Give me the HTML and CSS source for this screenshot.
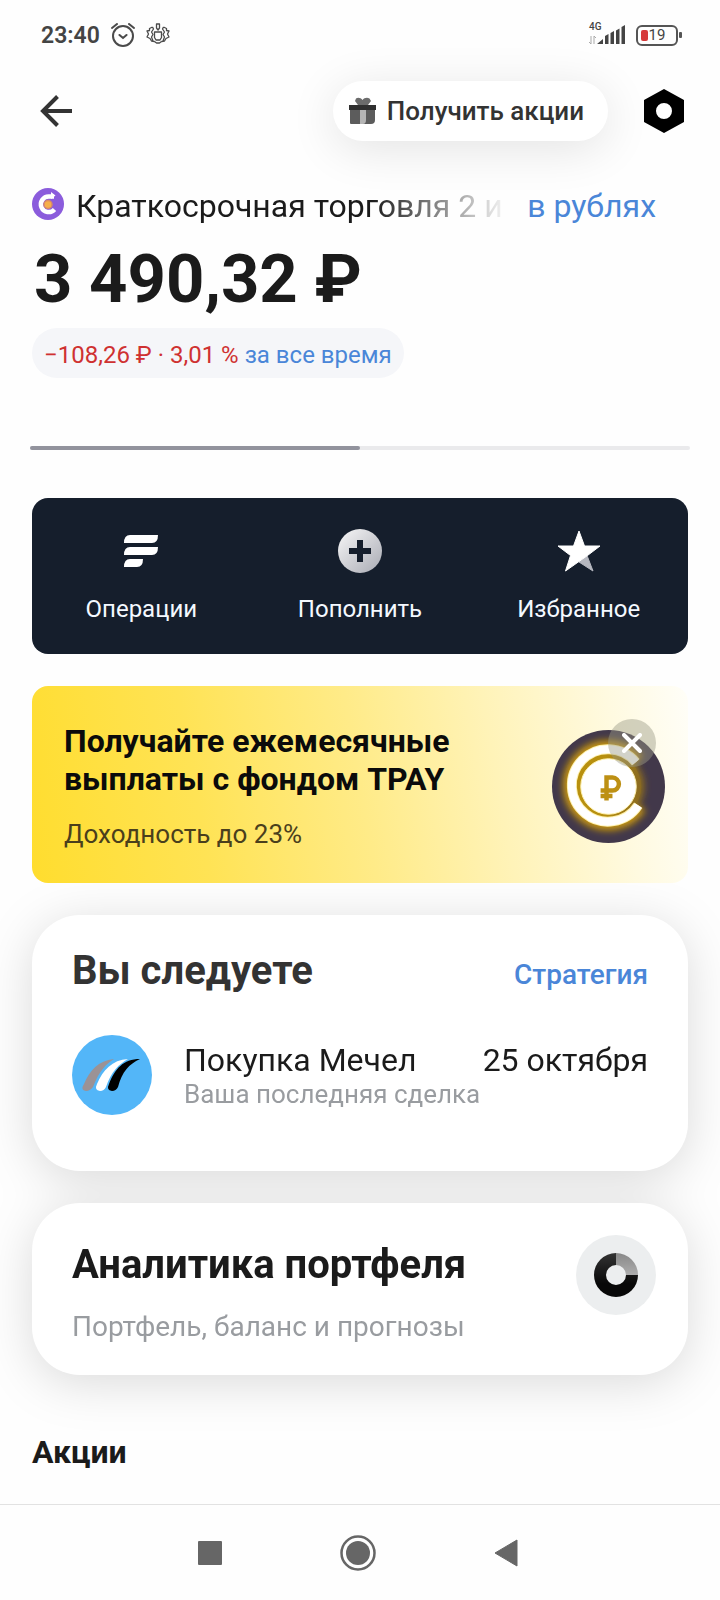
FILE: index.html
```html
<!DOCTYPE html>
<html lang="ru">
<head>
<meta charset="utf-8">
<meta name="viewport" content="width=device-width, initial-scale=1">
<title>Портфель</title>
<link rel="stylesheet" href="styles.css">
</head>
<body>
<div class="status">
  <span class="status-time">23:40</span>
  <svg class="status-icon" width="24" height="24" viewBox="0 0 24 24" fill="none" stroke="#4a4a4a" stroke-width="2" stroke-linecap="round">
    <circle cx="12" cy="13" r="10"/><path d="M8.500 12l3.500 3 3.500-3M1 5l5-4M23 5l-5-4"/>
  </svg>
  <svg class="status-icon" width="24" height="24" viewBox="0 0 24 24" fill="none" stroke="#4a4a4a" stroke-width="1.300" stroke-linejoin="round">
    <path d="M10.500 1h3v4l-1.500 2-1.500-2zM8.500 9h7v5.500l-1.500 2.500h-4l-1.500-2.500z"/>
    <path d="M6.500 4L3.500 5.500v2L1 8l1.500 3L1 14l3 1.500L5.500 18l3 .5M6.500 4l1 2-2 3 1.500 2.500-1.500 2.500 1.500 4M17.500 4l3 1.500v2L23 8l-1.500 3 1.500 3-3 1.500-1.500 2.500-3 .5M17.500 4l-1 2 2 3-1.500 2.500 1.500 2.500-1.500 4M8.500 18.500L10.500 20h3l2-1.500"/>
  </svg>
  <span class="status-gap"></span>
  <span class="network">
    <span class="network-type">4G</span>
    <svg width="38" height="20" viewBox="0 0 38 20">
      <path d="M4 11v8l-2-2M7 19v-8l2 2" fill="none" stroke="#aaa"/>
      <path d="M10 19h6v-5zM18 19h3.500V9L18 11zM23.500 19H27V6l-3.500 2zM29 19h3.500V3.500L29 5.500zM34.500 19H38V0l-3.500 2z" fill="#444"/>
    </svg>
  </span>
  <span class="battery"><span class="battery-level"></span>19</span>
</div>

<header class="topbar">
  <button class="icon-button" aria-label="Назад">
    <svg width="32" height="32" viewBox="0 0 32 32" fill="none" stroke="#333" stroke-width="4"><path d="M32 16H3M17.500 1.500L3 16l14.500 14.500"/></svg>
  </button>
  <button class="gift">
    <svg width="28" height="28" viewBox="0 0 28 28">
      <path d="M7 1.500C9 0 12 1 13.500 3 15 1 18 0 20.500 1.500L22 4l-3 4H9L6 4z" fill="#6c6c6c"/>
      <path d="M1 13h25v10q0 4-4 4H2q-1 0-1-1z" fill="#5c5c5c"/>
      <path d="M11 13h6v10q0 4-3 4h-3z" fill="#b5b5b5"/>
      <path d="M0 8h27v5H0z" fill="#303030"/>
    </svg>
    Получить акции
  </button>
  <button class="icon-button" aria-label="Настройки">
    <svg width="40" height="44" viewBox="0 0 40 44"><path fill-rule="evenodd" d="M20 0l20 11v22L20 44 0 33V11zM20 14a8 8 0 1 0 0 16 8 8 0 0 0 0-16z"/></svg>
  </button>
</header>

<main class="content">
  <section class="account">
    <div class="account-row">
      <svg class="account-logo" width="32" height="32" viewBox="0 0 32 32">
        <circle cx="16" cy="16" r="16" fill="#8b5cdc"/>
        <path d="M22 8.500h-5a7.800 7.800 0 1 0 5.500 13" fill="none" stroke="#fff" stroke-width="4.500"/>
        <path d="M19 4l4.500 3.500L19 11z" fill="#fff"/>
        <circle cx="16" cy="16.500" r="4" fill="#f6b04a" stroke="#d98a68" stroke-width="1.500"/>
      </svg>
      <span class="account-name">Краткосрочная торговля 2 и 3</span>
      <a class="currency" href="#currency">в рублях</a>
    </div>
    <h1 class="balance">3 490,32 ₽</h1>
    <button class="change"><span class="loss">−108,26 ₽ · 3,01 %</span><span class="period">за все время</span></button>
  </section>

  <div class="pager"><span class="pager-current"></span></div>

  <nav class="actions">
    <button class="action">
      <span class="action-icon"><svg width="34" height="32" viewBox="0 0 34 32" fill="#fff"><path d="M6 0h28q0 8-6 8H0Q0 0 6 0zM6 12h28q0 8-6 8H0q0-8 6-8zM6 24h13q0 8-6 8H0q0-8 6-8z"/></svg></span>
      Операции
    </button>
    <button class="action">
      <span class="action-icon"><svg width="44" height="44" viewBox="0 0 44 44">
        <defs><linearGradient id="coin" x1="0" y1="0" x2="1" y2="1"><stop offset=".15" stop-color="#ececee"/><stop offset=".9" stop-color="#b0b2ba"/></linearGradient></defs>
        <circle cx="22" cy="22" r="22" fill="url(#coin)"/>
        <path d="M22 14v16M14 22h16" stroke="#151e2c" stroke-width="6" stroke-linecap="square"/>
      </svg></span>
      Пополнить
    </button>
    <button class="action">
      <span class="action-icon"><svg width="44" height="42" viewBox="0 0 44 42" stroke-linejoin="round" stroke-width="1">
        <path d="M30 25.500L36 41 22 32z" fill="#b6b8c0" stroke="#b6b8c0"/>
        <path d="M22 1l5.500 15H43L30.500 25.500 8.500 41l5-15.500L1 16h15.500z" fill="#fff" stroke="#fff"/>
      </svg></span>
      Избранное
    </button>
  </nav>

  <section class="promo">
    <div class="promo-text">
      <h2 class="promo-title">Получайте ежемесячные выплаты с фондом TPAY</h2>
      <p class="promo-note">Доходность до 23%</p>
    </div>
    <div class="promo-art">
      <svg width="113" height="113" viewBox="0 0 114 114">
        <defs>
          <linearGradient id="rim" x1="0" y1="0" x2="1" y2="0"><stop offset=".45" stop-color="#b8900f"/><stop offset="1" stop-color="#8a6a20"/></linearGradient>
          <filter id="halo" x="-30%" y="-30%" width="160%" height="160%"><feGaussianBlur stdDeviation="4"/></filter>
        </defs>
        <circle cx="57" cy="57" r="57" fill="#42384a"/>
        <path d="M84.500 32.500A36.500 36.500 0 1 0 87 76" fill="none" stroke="#c8960c" stroke-width="18" filter="url(#halo)"/>
        <circle cx="59" cy="57" r="34" fill="url(#rim)" filter="url(#halo)"/>
        <circle cx="57" cy="57" r="33" fill="url(#rim)"/>
        <path d="M84.500 32.500A36.500 36.500 0 1 0 87 76" fill="none" stroke="#fff2b0" stroke-width="10"/>
        <path d="M84.500 32.500A36.500 36.500 0 1 0 87 76" fill="none" stroke="#fff" stroke-width="8"/>
        <circle cx="57" cy="57" r="28" fill="#fff" stroke="#fff2b0"/>
        <path d="M55 71V48h6a6.500 6.500 0 0 1 0 13H49M49 66.500h12" fill="none" stroke="#bd9014" stroke-width="4.500"/>
      </svg>
      <button class="promo-close" aria-label="Закрыть">
        <svg width="20" height="20" viewBox="0 0 20 20" stroke="#fff" stroke-width="4" stroke-linecap="round"><path d="M2 2l16 16M18 2L2 18"/></svg>
      </button>
    </div>
  </section>

  <div class="cards">
    <section class="card strategy">
      <div class="card-head">
        <h2 class="card-title following">Вы следуете</h2>
        <a class="card-link" href="#strategy">Стратегия</a>
      </div>
      <div class="deal">
        <svg width="80" height="80" viewBox="0 0 80 80">
          <circle cx="40" cy="40" r="40" fill="#53b6f8"/>
          <path d="M12 49C18 35 26 26 42 24c-8 5-15 12-21 28q-3 4-7 4-6-1-2-7z" fill="#9b9295"/>
          <path d="M25 49C31 35 40 25 56 24c-9 5-17 13-22 28q-2 4-6 4-6-1-3-7z" fill="#fff"/>
          <path d="M37 49C43 34 51 24 68 24c-11 5-18 13-22 28q-2 4-6 4-6-1-3-7z"/>
        </svg>
        <div class="deal-text">
          <div class="deal-line"><span>Покупка Мечел</span><span>25 октября</span></div>
          <div class="deal-note">Ваша последняя сделка</div>
        </div>
      </div>
    </section>
    <section class="card analytics">
      <div>
        <h2 class="card-title">Аналитика портфеля</h2>
        <p class="card-note">Портфель, баланс и прогнозы</p>
      </div>
      <svg width="80" height="80" viewBox="0 0 80 80">
        <defs>
          <linearGradient id="ring" x1="0" y1="0" x2="0" y2="1"><stop offset="0" stop-color="#333"/><stop offset=".7" stop-color="#080808"/></linearGradient>
          <linearGradient id="part" x1="0" y1="0" x2="0" y2="1"><stop offset="0" stop-color="#888"/><stop offset="1" stop-color="#adadad"/></linearGradient>
        </defs>
        <circle cx="40" cy="40" r="40" fill="#eceeef"/>
        <path d="M40 18v12a10 10 0 1 0 10 10h12a22 22 0 1 1-22-22z" fill="url(#ring)"/>
        <path d="M40 18a22 22 0 0 1 22 22H50a10 10 0 0 0-10-10z" fill="url(#part)"/>
      </svg>
    </section>
  </div>

  <h2 class="section-title">Акции</h2>
</main>

<nav class="system-nav">
  <button class="icon-button" aria-label="Недавние"><svg width="24" height="24" viewBox="0 0 24 24"><rect width="24" height="24" rx="1" fill="#666"/></svg></button>
  <button class="icon-button" aria-label="Домой"><svg width="36" height="36" viewBox="0 0 36 36"><circle cx="18" cy="18" r="16.500" fill="none" stroke="#666" stroke-width="2.500"/><circle cx="18" cy="18" r="12" fill="#666"/></svg></button>
  <button class="icon-button" aria-label="Назад в системе"><svg width="24" height="28" viewBox="0 0 24 28"><path d="M23 1v26L1 14z" fill="#666" stroke="#666" stroke-linejoin="round"/></svg></button>
</nav>
</body>
</html>
```
FILE: styles.css
```css
* {
  box-sizing: border-box;
}

body {
  margin: 0;
  min-height: 100vh;
  display: flex;
  flex-direction: column;
  background: #fefefe;
  color: #1b1b1b;
  font-family: Roboto, "Open Sans", sans-serif;
}

h1, h2, p {
  margin: 0;
}

a {
  color: #4a86d8;
  text-decoration: none;
}

button {
  margin: 0;
  padding: 0;
  border: 0;
  background: none;
  color: inherit;
  font: inherit;
}

svg {
  display: block;
  flex: none;
}

.status {
  display: flex;
  align-items: center;
  height: 70px;
  padding: 0 42px 0 41px;
  color: #444;
}

.status-time {
  font-size: 23px;
  font-weight: 600;
}

.status-icon {
  margin-left: 11px;
}

.status-gap {
  flex: 1;
}

.network {
  position: relative;
}

.network-type {
  position: absolute;
  top: -4px;
  left: 2px;
  font-size: 10px;
  line-height: 12px;
  font-weight: 500;
}

.battery {
  position: relative;
  display: flex;
  align-items: center;
  justify-content: center;
  width: 42px;
  height: 21px;
  margin-left: 11px;
  border: 2px solid #555;
  border-radius: 6px;
  font-size: 15px;
}

.battery::after {
  content: "";
  position: absolute;
  top: 5px;
  right: -6px;
  width: 3px;
  height: 6px;
  border-radius: 1px;
  background: #555;
}

.battery-level {
  position: absolute;
  top: 3px;
  left: 3px;
  width: 7px;
  height: 11px;
  border-radius: 2px;
  background: #d63a3a;
  z-index: -1;
}

.topbar {
  display: flex;
  align-items: center;
  padding: 11px 36px 0 40px;
}

.icon-button {
  display: flex;
}

.gift {
  display: flex;
  align-items: center;
  gap: 10px;
  height: 60px;
  margin: 0 36px 0 auto;
  padding: 0 24px 0 16px;
  border-radius: 30px;
  background: #fff;
  box-shadow: 0 8px 48px rgba(0, 0, 0, 0.11);
  color: #333;
  font-size: 26px;
  font-weight: 500;
}

.content {
  padding: 0 32px;
}

.account-row {
  display: flex;
  align-items: center;
  margin-top: 45px;
  padding-right: 32px;
  font-size: 32px;
  line-height: 40px;
}

.account-logo {
  margin-bottom: 4px;
}

.account-name {
  flex: 1;
  min-width: 0;
  margin: 0 16px 0 12px;
  overflow: hidden;
  white-space: nowrap;
  -webkit-mask-image: linear-gradient(90deg, #000 68%, transparent 100%);
  mask-image: linear-gradient(90deg, #000 68%, transparent 100%);
}

.balance {
  margin-top: 13px;
  padding-left: 2px;
  font-size: 67px;
  line-height: 80px;
  font-weight: 700;
}

.change {
  display: flex;
  align-items: center;
  gap: 6px;
  height: 50px;
  margin-top: 9px;
  padding: 3px 12px 0;
  border-radius: 25px;
  background: #f5f6f9;
  font-size: 24px;
}

.loss {
  color: #cf3131;
}

.period {
  color: #4a86d8;
}

.pager {
  height: 4px;
  margin: 68px -2px 0;
  border-radius: 2px;
  background: #eaeaec;
}

.pager-current {
  display: block;
  width: 50%;
  height: 4px;
  border-radius: 2px;
  background: #92939d;
}

.actions {
  display: grid;
  grid-template-columns: repeat(3, 1fr);
  margin-top: 48px;
  padding: 29px 0;
  border-radius: 16px;
  background: #151e2c;
  color: #f4f9ff;
}

.action {
  display: flex;
  flex-direction: column;
  align-items: center;
  gap: 18px;
  font-size: 24px;
  line-height: 32px;
}

.action-icon {
  display: flex;
  align-items: center;
  justify-content: center;
  height: 48px;
}

.promo {
  position: relative;
  z-index: 1;
  display: flex;
  align-items: center;
  justify-content: space-between;
  margin-top: 32px;
  padding: 36px 23px 33px 32px;
  border-radius: 16px;
  background: linear-gradient(80deg, #ffdd2e 0%, #ffe355 26%, #ffeb88 50%, #fff3b8 70%, #fffae0 88%, #fffef8 100%);
}

.promo-text {
  width: 420px;
}

.promo-title {
  color: #0b0b0b;
  font-size: 32px;
  line-height: 38px;
  font-weight: 700;
}

.promo-note {
  margin-top: 20px;
  color: #4a3f1c;
  font-size: 26px;
  line-height: 32px;
}

.promo-art {
  position: relative;
}

.promo-close {
  position: absolute;
  top: -11px;
  right: 9px;
  display: flex;
  align-items: center;
  justify-content: center;
  width: 48px;
  height: 48px;
  border-radius: 50%;
  background: rgba(155, 155, 135, 0.45);
}

.cards {
  display: flex;
  flex-direction: column;
  gap: 32px;
  margin-top: 32px;
  filter: drop-shadow(0 8px 24px rgba(0, 0, 0, 0.14));
}

.card {
  padding: 32px 40px;
  border-radius: 48px;
  background: #fff;
}

.strategy {
  padding-bottom: 56px;
}

.card-head {
  display: flex;
  align-items: baseline;
  justify-content: space-between;
}

.card-title {
  font-size: 40px;
  line-height: 48px;
  font-weight: 700;
}

.following {
  color: #333;
}

.card-link {
  font-size: 28px;
  font-weight: 500;
}

.deal {
  display: flex;
  gap: 32px;
  margin-top: 40px;
}

.deal-text {
  flex: 1;
  padding-top: 5px;
}

.deal-line {
  display: flex;
  justify-content: space-between;
  font-size: 32px;
  line-height: 40px;
}

.deal-note {
  color: #999ca0;
  font-size: 26px;
  line-height: 28px;
}

.analytics {
  display: flex;
  align-items: flex-start;
  justify-content: space-between;
  padding-right: 32px;
}

.analytics .card-title {
  margin-top: 6px;
}

.card-note {
  margin-top: 22px;
  color: #999ca0;
  font-size: 28px;
  line-height: 32px;
}

.section-title {
  margin-top: 57px;
  font-size: 32px;
  line-height: 40px;
  font-weight: 700;
}

.system-nav {
  display: flex;
  align-items: center;
  justify-content: center;
  gap: 118px;
  height: 96px;
  margin-top: auto;
  padding-right: 4px;
  border-top: 1px solid #e2e2e2;
}
```
